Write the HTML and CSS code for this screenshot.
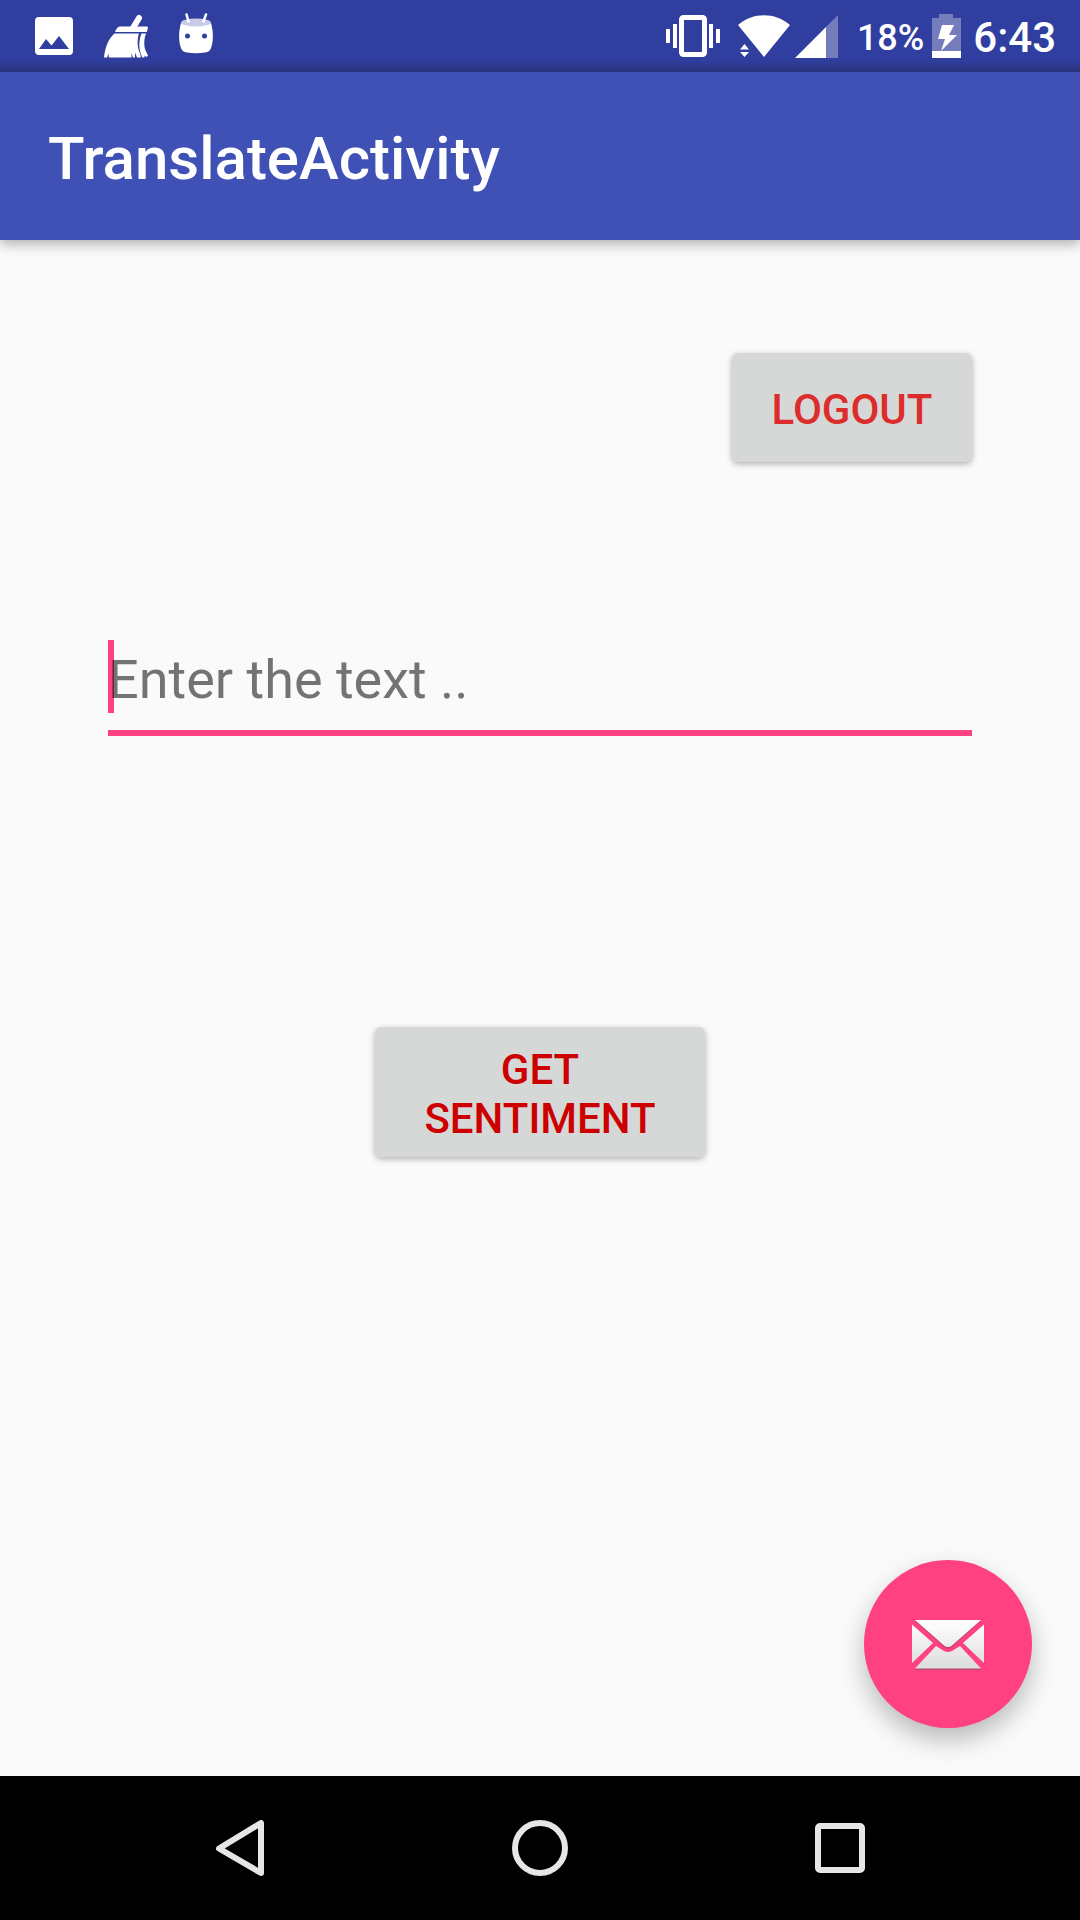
FILE: index.html
```html
<!DOCTYPE html>
<html lang="en">
<head>
<meta charset="utf-8">
<meta name="viewport" content="width=device-width, initial-scale=1">
<title>TranslateActivity</title>
<link rel="stylesheet" href="styles.css">
</head>
<body>
<div class="status-bar">
  <div class="status-left">
    <svg class="icon" width="38" height="38" viewBox="0 0 38 38" aria-hidden="true">
      <path fill="#fff" fill-rule="evenodd" d="M4 0h30a4 4 0 0 1 4 4v30a4 4 0 0 1-4 4H4a4 4 0 0 1-4-4V4a4 4 0 0 1 4-4zM4 32h30L24 19l-7.500 9.500L11 22z"/>
    </svg>
    <svg class="icon" width="44" height="44" viewBox="0 0 44 44" aria-hidden="true">
      <path stroke="#fff" stroke-width="6" stroke-linecap="round" d="M35 4 29 14"/>
      <path fill="#fff" d="M16 12.500h27c1 0 1 1 .8 2l-1 3.500H11c1-3 2.500-5.500 5-5.500zM10.500 19.500H35c-2 6-2 13 1 20l1 4h-4l-2-5v5H29l-1.500-4.500V43.500H5l-.8-4-.9 4H0C1 34 4 25 10.500 19.500zM37.500 19.500H42c-2 5-2.500 13 0 18l2 4-1.500 1.500-2-1.500v2h-2c-4-7-4-17-1-24z"/>
    </svg>
    <svg class="icon" width="34" height="46" viewBox="0 0 34 46" aria-hidden="true">
      <path fill="#fff" d="M2 10C9 13.500 25 13.500 32 10c2.500 8 2.500 19 0 25-1 3-3 4-6 4.500-6 1-12 1-18 0-3-.5-5-1.500-6-4.500-2.500-6-2.500-17 0-25z"/>
      <ellipse cx="17" cy="9.500" rx="15" ry="4" fill="#c8cbe6"/>
      <path stroke="#fff" stroke-width="2.500" stroke-linecap="round" d="m7.500 1.500 2 7M27 1.500l-2.500 7"/>
      <circle cx="8.500" cy="23" r="2.500" fill="#303f9f"/>
      <circle cx="25.500" cy="23" r="2.500" fill="#303f9f"/>
    </svg>
  </div>
  <div class="status-right">
    <svg class="icon" width="54" height="42" viewBox="0 0 54 42" aria-hidden="true">
      <path fill="#fff" d="M0 14h4v14H0zM7 9h4v24H7zM43 9h4v24h-4zM50 14h4v14h-4z"/>
      <rect x="15.500" y="2.500" width="23" height="37" rx="2" fill="none" stroke="#fff" stroke-width="5"/>
    </svg>
    <svg class="icon wifi" width="52" height="42" viewBox="0 0 52 42" aria-hidden="true">
      <path fill="#fff" d="M0 10C15-3 37-3 52 10L26 42zM2 34.500 6.500 29l4.500 5.500zM2 37h9l-4.500 5z"/>
    </svg>
    <svg class="icon" width="43" height="43" viewBox="0 0 43 43" aria-hidden="true">
      <path fill="#747cbc" d="M43 0v43H31V12z"/>
      <path fill="#fff" d="M31 12v31H0z"/>
    </svg>
    <span class="battery-level">18%</span>
    <svg class="icon battery" width="29" height="44" viewBox="0 0 29 44" aria-hidden="true">
      <path fill="#747cbc" d="M7 0h14v4h8v40H0V4h7z"/>
      <path fill="#fff" d="M0 37h29v7H0zM10 11h12l-5 10h8L9 37l4-12H6z"/>
    </svg>
    <time class="clock">6:43</time>
  </div>
</div>

<header class="app-bar">
  <h1 class="title">TranslateActivity</h1>
</header>

<main class="content">
  <button type="button" class="button logout">LOGOUT</button>
  <div class="field">
    <input class="field-input" type="text" placeholder="Enter the text .." aria-label="Enter the text">
  </div>
  <button type="button" class="button sentiment">GET SENTIMENT</button>
  <button type="button" class="fab" aria-label="Mail">
    <svg class="icon" width="72" height="52" viewBox="0 0 72 52" aria-hidden="true">
      <defs>
        <linearGradient id="paper" gradientUnits="userSpaceOnUse" x1="0" y1="0" x2="0" y2="52">
          <stop offset="0.200" stop-color="#fafafa"/>
          <stop offset="0.900" stop-color="#dedede"/>
        </linearGradient>
      </defs>
      <g fill="#8d4b63" fill-opacity="0.600">
        <path d="M3 3h66L40 29q-4 3-8 0z"/>
        <path d="m3 52 21-23 8 5q4 2 8 0l8-5 21 23z"/>
      </g>
      <g fill="url(#paper)">
        <path d="M3 2h66L40 27.500q-4 3-8 0z"/>
        <path d="M0 6.500 21 25 0 45zM72 6.500 51 25l21 20z"/>
        <path d="m3 50.500 21-22.500 8 5q4 2 8 0l8-5 21 22.500z"/>
      </g>
    </svg>
  </button>
</main>

<nav class="nav-bar">
  <button type="button" class="nav-button" aria-label="Back">
    <svg class="icon" width="56" height="56" viewBox="0 0 56 56" aria-hidden="true">
      <path fill="none" stroke="#e6e6e6" stroke-width="6" stroke-linejoin="round" d="M49 3v50L7 28.500z"/>
    </svg>
  </button>
  <button type="button" class="nav-button" aria-label="Home">
    <svg class="icon" width="56" height="56" viewBox="0 0 56 56" aria-hidden="true">
      <circle cx="28" cy="28" r="25" fill="none" stroke="#e6e6e6" stroke-width="6"/>
    </svg>
  </button>
  <button type="button" class="nav-button" aria-label="Recent apps">
    <svg class="icon" width="56" height="56" viewBox="0 0 56 56" aria-hidden="true">
      <rect x="6" y="6" width="44" height="44" rx="2" fill="none" stroke="#e6e6e6" stroke-width="6"/>
    </svg>
  </button>
</nav>
</body>
</html>
```
FILE: styles.css
```css
* {
  box-sizing: border-box;
}

body {
  margin: 0;
  min-height: 100vh;
  display: flex;
  flex-direction: column;
  background: #fafafa;
  font-family: Roboto, "Liberation Sans", sans-serif;
}

button {
  border: 0;
  font-family: inherit;
}

.icon {
  display: block;
  flex: none;
}

.status-bar {
  height: 72px;
  padding: 0 24px 0 35px;
  display: flex;
  justify-content: space-between;
  align-items: center;
  background: linear-gradient(#303f9f 60px, #2b3784);
  color: #fff;
}

.status-left,
.status-right {
  display: flex;
  align-items: center;
}

.status-left {
  gap: 31px;
}

.wifi {
  margin: 0 5px 0 18px;
}

.battery-level,
.clock {
  padding-top: 4px;
  font-weight: 500;
  line-height: 48px;
}

.battery-level {
  margin-left: 19px;
  font-size: 36px;
}

.battery {
  margin: 0 12px 0 8px;
}

.clock {
  font-size: 42px;
}

.app-bar {
  position: relative;
  height: 168px;
  padding: 6px 48px 0;
  display: flex;
  align-items: center;
  background: #3f51b5;
  box-shadow: 0 4px 12px rgba(0, 0, 0, 0.3);
}

.title {
  margin: 0;
  color: #fff;
  font-size: 60px;
  font-weight: 500;
  line-height: 72px;
}

.content {
  position: relative;
  flex: 1;
  padding: 113px 108px 0;
  display: flex;
  flex-direction: column;
  align-items: center;
}

.button {
  padding: 18px 36px 14px;
  border-radius: 6px;
  background: #d6d8d7;
  font-size: 42px;
  font-weight: 500;
  line-height: 49px;
  box-shadow: 0 2px 6px rgba(0, 0, 0, 0.3);
}

.logout {
  align-self: flex-end;
  width: 240px;
  height: 109px;
  color: #dd2c2c;
}

.field {
  position: relative;
  z-index: 0;
  width: 100%;
  margin: 178px 0 291px;
  padding-bottom: 12px;
  border-bottom: 6px solid #ff4081;
}

/* text cursor, painted behind the hint */
.field::before {
  content: "";
  position: absolute;
  z-index: -1;
  top: 0;
  left: 0;
  width: 6px;
  height: 73px;
  background: #ff4081;
}

.field-input {
  display: block;
  width: 100%;
  height: 78px;
  padding: 0;
  border: 0;
  outline: 0;
  background: transparent;
  color: #212121;
  caret-color: #ff4081;
  font-family: inherit;
  font-size: 54px;
}

.field-input::placeholder {
  color: rgba(0, 0, 0, 0.54);
  opacity: 1;
}

.sentiment {
  width: 330px;
  color: #cc0000;
}

.fab {
  position: absolute;
  right: 48px;
  bottom: 48px;
  width: 168px;
  height: 168px;
  padding: 0;
  display: grid;
  place-items: center;
  border-radius: 50%;
  background: #ff4081;
  box-shadow: 0 12px 26px rgba(0, 0, 0, 0.26);
}

.nav-bar {
  height: 144px;
  padding: 0 90px;
  display: grid;
  grid-template-columns: repeat(3, 1fr);
  background: #000;
}

.nav-button {
  padding: 0;
  display: grid;
  place-items: center;
  background: transparent;
}
```
